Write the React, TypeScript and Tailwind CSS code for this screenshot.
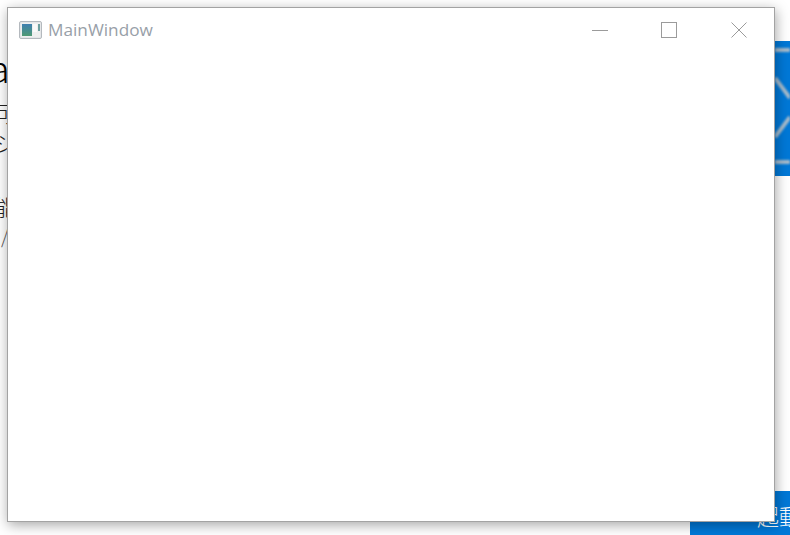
const cjk = { fontFamily: '"Noto Sans CJK JP", "Noto Sans", sans-serif' };

function AppIcon() {
  return (
    <svg width="23" height="18" viewBox="0 0 23 18" className="shrink-0">
      <defs>
        <linearGradient id="pane" x1="0" y1="0" x2="0" y2="1">
          <stop offset="0" stopColor="#3f7fb0" />
          <stop offset="1" stopColor="#4f9a74" />
        </linearGradient>
      </defs>
      <rect x="0.5" y="0.5" width="22" height="17" rx="1.5" fill="#e4e6e8" stroke="#b4b9be" />
      <rect x="2" y="2" width="19" height="14" fill="#eeefef" />
      <rect x="3" y="3" width="10" height="12" fill="url(#pane)" />
      <rect x="14" y="3" width="4" height="8" fill="#f9f9f9" />
      <rect x="19" y="3" width="2" height="7" fill="#6d9f9e" />
    </svg>
  );
}

function CaptionButtons() {
  return (
    <div className="flex items-center text-[#9b9b9b]">
      <svg width="17" height="17" viewBox="0 0 17 17" className="mr-[52px]">
        <path d="M0 9.5H16" stroke="currentColor" strokeWidth="1" />
      </svg>
      <svg width="16" height="16" viewBox="0 0 16 16" className="mr-[54px]">
        <rect x="0.5" y="0.5" width="15" height="15" fill="none" stroke="currentColor" />
      </svg>
      <svg width="16" height="16" viewBox="0 0 16 16" className="mr-[27px]">
        <path d="M0.5 0.5L15.5 15.5M15.5 0.5L0.5 15.5" stroke="currentColor" strokeWidth="1" />
      </svg>
    </div>
  );
}

export default function App() {
  return (
    <div className="relative h-[535px] w-[790px] overflow-hidden bg-white" style={cjk}>
      {/* page behind the window */}
      <div className="absolute left-[-11px] top-[43px] text-[38px] font-light leading-[48px] text-black">a</div>
      <div className="absolute left-[-6px] top-[96px] flex flex-col text-[22px] font-light text-[#222]">
        <span className="h-[32px] leading-[32px]">可</span>
        <span className="h-[64px] leading-[28px]">シ</span>
        <span className="h-[28px] leading-[28px]">能</span>
        <span className="h-[32px] pl-[7px] text-[19px] leading-[32px] text-[#555]">/</span>
      </div>
      <div className="absolute left-[775px] top-[41px] h-[135px] w-[60px] bg-[#0078d7]">
        <svg width="15" height="135" viewBox="0 0 15 135" className="block blur-[0.8px]">
          <path
            d="M0 9H15M0 121H15M0 37L15 57M0 96L15 76"
            stroke="#a9bccb"
            strokeWidth="4"
            fill="none"
          />
        </svg>
      </div>
      <div className="absolute left-[690px] top-[491px] flex h-[44px] w-[100px] items-start bg-[#0078d7] pl-[67px] pt-[6px] text-[22px] font-light leading-[36px] whitespace-nowrap text-white">
        起動
      </div>

      {/* window */}
      <div className="absolute left-[7px] top-[7px] flex h-[515px] w-[768px] flex-col border border-[#a3a3a3] bg-white shadow-[1px_3px_12px_rgba(0,0,0,0.35)]">
        <div className="flex h-[43px] items-center justify-between pl-[11px]">
          <div className="flex items-center gap-[6px]">
            <AppIcon />
            <span
              className="text-[17.2px] leading-none text-[#98a0a8]"
              style={{ fontFamily: '"Open Sans", sans-serif' }}
            >
              MainWindow
            </span>
          </div>
          <CaptionButtons />
        </div>
      </div>
    </div>
  );
}
